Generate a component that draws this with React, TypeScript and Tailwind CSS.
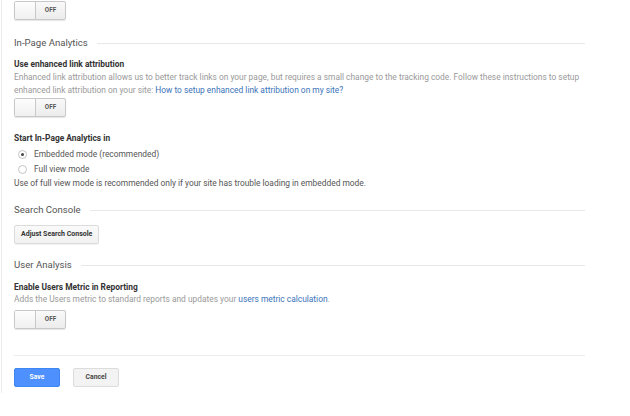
import React from "react";

function Toggle() {
  return (
    <div className="flex h-[19px] w-[52px] rounded-[2px] border border-[#c8c8c8] bg-gradient-to-b from-[#f9f9f9] to-[#ececec] shadow-[0_1px_1px_rgba(0,0,0,0.1)]">
      <div className="w-[21px] border-r border-[#c8c8c8] bg-gradient-to-b from-[#fdfdfd] to-[#f0f0f0]" />
      <div className="flex flex-1 items-center justify-center text-[6.3px] font-bold text-[#555]">OFF</div>
    </div>
  );
}

function Heading({ children }: { children: React.ReactNode }) {
  return (
    <div className="flex items-center gap-[9px]">
      <span className="whitespace-nowrap text-[9.6px] leading-[14px] text-[#555]">{children}</span>
      <div className="h-px flex-1 bg-[#e8e8e8]" />
    </div>
  );
}

function Radio({ checked, label }: { checked?: boolean; label: string }) {
  return (
    <div className="flex h-[15px] items-center">
      <div className="ml-[4px] flex h-[9px] w-[9px] items-center justify-center rounded-full border border-[#c4c4c4] bg-white">
        {checked && <div className="h-[3px] w-[3px] rounded-full bg-[#444]" />}
      </div>
      <span className="ml-[7px] text-[8.4px] leading-[13px] text-[#555]">{label}</span>
    </div>
  );
}

export default function App() {
  return (
    <div className="h-[416px] w-[630px] bg-white font-['Roboto','Liberation_Sans',sans-serif]">
      <div className="ml-[1px] flex h-[393px] w-[584px] flex-col border-l border-[#ececec] pl-[12px]">
        <div className="mt-[1px]">
          <Toggle />
        </div>

        <div className="mt-[16px]">
          <Heading>In-Page Analytics</Heading>
        </div>

        <div className="mt-[8px] text-[8.4px] font-bold leading-[13px] text-[#333]">Use enhanced link attribution</div>
        <div className="text-[8.4px] leading-[13px] text-[#9a9a9a]">
          Enhanced link attribution allows us to better track links on your page, but requires a small change to the tracking code. Follow these instructions to setup enhanced link attribution on your site:{" "}
          <a className="text-[#3b73b9]">How to setup enhanced link attribution on my site?</a>
        </div>
        <div className="mt-[1px]">
          <Toggle />
        </div>

        <div className="mt-[15px] text-[8.4px] font-bold leading-[12px] text-[#333]">Start In-Page Analytics in</div>
        <div className="mt-[3px]">
          <Radio checked label="Embedded mode (recommended)" />
          <Radio label="Full view mode" />
        </div>
        <div className="text-[8.4px] leading-[13px] text-[#555]">
          Use of full view mode is recommended only if your site has trouble loading in embedded mode.
        </div>

        <div className="mt-[13px]">
          <Heading>Search Console</Heading>
        </div>
        <div className="mt-[8px]">
          <button className="flex h-[19px] items-center rounded-[2px] border border-[#dcdcdc] bg-gradient-to-b from-[#fafafa] to-[#f1f1f1] px-[6px] text-[7px] font-bold text-[#333] shadow-[0_1px_1px_rgba(0,0,0,0.06)]">
            Adjust Search Console
          </button>
        </div>

        <div className="mt-[14px]">
          <Heading>User Analysis</Heading>
        </div>
        <div className="mt-[10px] text-[8.4px] font-bold leading-[10px] text-[#333]">Enable Users Metric in Reporting</div>
        <div className="mt-[1px] text-[8.4px] leading-[13px] text-[#9a9a9a]">
          Adds the Users metric to standard reports and updates your{" "}
          <a className="text-[#3b73b9]">users metric calculation</a>.
        </div>
        <div className="mt-[4px]">
          <Toggle />
        </div>

        <div className="mt-[26px] h-px bg-[#ececec]" />

        <div className="mt-[12px] flex gap-[13px]">
          <button className="flex h-[19px] w-[46px] items-center justify-center rounded-[2px] border border-[#3f86f5] bg-[#4d90fe] text-[6.8px] font-bold text-white">
            Save
          </button>
          <button className="flex h-[19px] w-[46px] items-center justify-center rounded-[2px] border border-[#dcdcdc] bg-[#f3f3f3] text-[6.8px] font-bold text-[#444]">
            Cancel
          </button>
        </div>
      </div>
    </div>
  );
}
